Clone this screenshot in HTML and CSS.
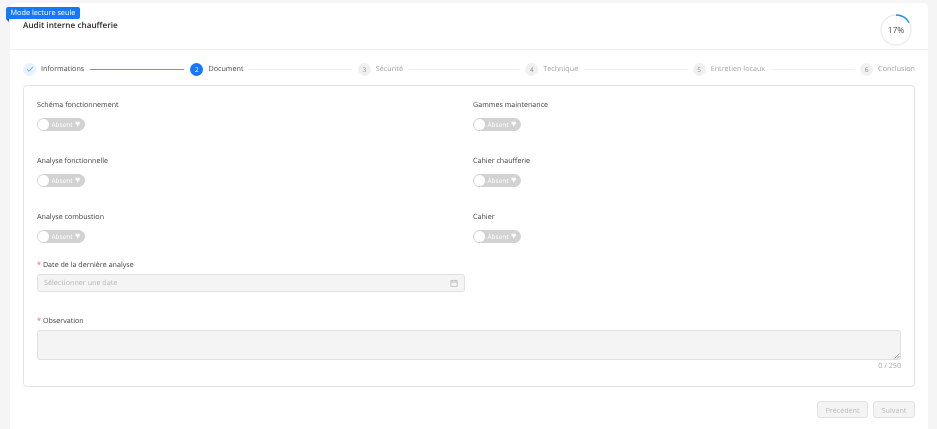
FILE: index.html
```html
<!DOCTYPE html>
<html lang="fr">
<head>
<meta charset="utf-8">
<title>Audit interne chaufferie</title>
<link rel="stylesheet" href="styles.css">
</head>
<body>
<main class="card">
  <span class="ribbon">Mode lecture seule</span>
  <header class="head">
    <h1 class="title">Audit interne chaufferie</h1>
    <div class="progress">
      <svg viewBox="0 0 32 32" width="32" height="32" class="ring">
        <circle cx="16" cy="16" r="15" class="ring-bg"/>
        <circle cx="16" cy="16" r="15" class="ring-fg" pathLength="100" stroke-dasharray="17 83" transform="rotate(-90 16 16)"/>
      </svg>
      <span class="progress-text">17%</span>
    </div>
  </header>
  <div class="body">
    <ol class="steps">
      <li class="step">
        <span class="dot dot-done"><svg viewBox="0 0 12 12" width="8" height="8"><path d="M1.500 6.500 4.600 9.500 10.500 2.500" fill="none" stroke="#1677ff" stroke-width="1"/></svg></span>
        <span class="step-name step-name-dark">Informations</span>
        <span class="line line-done"></span>
      </li>
      <li class="step">
        <span class="dot dot-now">2</span>
        <span class="step-name step-name-dark">Document</span>
        <span class="line"></span>
      </li>
      <li class="step"><span class="dot">3</span><span class="step-name">Sécurité</span><span class="line"></span></li>
      <li class="step"><span class="dot">4</span><span class="step-name">Technique</span><span class="line"></span></li>
      <li class="step"><span class="dot">5</span><span class="step-name">Entretien locaux</span><span class="line"></span></li>
      <li class="step step-last"><span class="dot">6</span><span class="step-name">Conclusion</span></li>
    </ol>
    <form class="box">
      <div class="grid">
        <div class="field"><label class="label">Schéma fonctionnement</label><span class="switch"><i class="knob"></i><span class="switch-text">Absent</span><svg class="thumb" viewBox="0 0 10 10" width="8" height="8"><path d="M1 1h8v3.500q0 1-1 1.200L6.300 6.500 6 8.800q-.2.800-1 .8t-1-.8L3.700 6.500 2 5.700q-1-.2-1-1.200z" fill="#fff"/></svg></span></div>
        <div class="field"><label class="label">Gammes maintenance</label><span class="switch"><i class="knob"></i><span class="switch-text">Absent</span><svg class="thumb" viewBox="0 0 10 10" width="8" height="8"><path d="M1 1h8v3.500q0 1-1 1.200L6.300 6.500 6 8.800q-.2.800-1 .8t-1-.8L3.700 6.500 2 5.700q-1-.2-1-1.200z" fill="#fff"/></svg></span></div>
        <div class="field"><label class="label">Analyse fonctionnelle</label><span class="switch"><i class="knob"></i><span class="switch-text">Absent</span><svg class="thumb" viewBox="0 0 10 10" width="8" height="8"><path d="M1 1h8v3.500q0 1-1 1.200L6.300 6.500 6 8.800q-.2.800-1 .8t-1-.8L3.700 6.500 2 5.700q-1-.2-1-1.200z" fill="#fff"/></svg></span></div>
        <div class="field"><label class="label">Cahier chaufferie</label><span class="switch"><i class="knob"></i><span class="switch-text">Absent</span><svg class="thumb" viewBox="0 0 10 10" width="8" height="8"><path d="M1 1h8v3.500q0 1-1 1.200L6.300 6.500 6 8.800q-.2.800-1 .8t-1-.8L3.700 6.500 2 5.700q-1-.2-1-1.200z" fill="#fff"/></svg></span></div>
        <div class="field field-short"><label class="label">Analyse combustion</label><span class="switch"><i class="knob"></i><span class="switch-text">Absent</span><svg class="thumb" viewBox="0 0 10 10" width="8" height="8"><path d="M1 1h8v3.500q0 1-1 1.200L6.300 6.500 6 8.800q-.2.800-1 .8t-1-.8L3.700 6.500 2 5.700q-1-.2-1-1.200z" fill="#fff"/></svg></span></div>
        <div class="field field-short"><label class="label">Cahier</label><span class="switch"><i class="knob"></i><span class="switch-text">Absent</span><svg class="thumb" viewBox="0 0 10 10" width="8" height="8"><path d="M1 1h8v3.500q0 1-1 1.200L6.300 6.500 6 8.800q-.2.800-1 .8t-1-.8L3.700 6.500 2 5.700q-1-.2-1-1.200z" fill="#fff"/></svg></span></div>
        <div class="field-date">
          <label class="label"><span class="star">*</span>Date de la dernière analyse</label>
          <div class="date">
            <span class="placeholder">Sélectionner une date</span>
            <svg viewBox="0 0 10 10" width="8" height="8"><path d="M1 2h8v7.500H1zM1 4h8M3 1v2M7 1v2" fill="none" stroke="#b5b5b5" stroke-width=".9"/></svg>
          </div>
        </div>
      </div>
      <label class="label"><span class="star">*</span>Observation</label>
      <div class="area">
        <svg class="grip" viewBox="0 0 6 6" width="6" height="6"><path d="M0.500 5.500 5.500 0.500M3 5.500 5.500 3" stroke="#888" stroke-width=".8"/></svg>
      </div>
      <div class="count">0 / 250</div>
    </form>
    <div class="actions">
      <button type="button" class="btn btn-prev" disabled>Précédent</button>
      <button type="button" class="btn btn-next" disabled>Suivant</button>
    </div>
  </div>
</main>
</body>
</html>
```
FILE: styles.css
```css
* { box-sizing: border-box; }
html, body { margin: 0; height: 100%; overflow: hidden; }
body {
  background: #f5f5f5;
  font-family: "Open Sans", "Noto Sans", sans-serif;
  font-size: 8px;
  color: #3b3b3b;
  text-rendering: geometricPrecision;
}
.card {
  position: relative;
  margin: 3px 9px 0 10px;
  height: 426px;
  background: #fff;
  border-radius: 5px 5px 0 0;
  filter: blur(.3px);
}
.ribbon {
  position: absolute;
  left: -4px;
  top: 4px;
  height: 12px;
  padding: 0 4.500px;
  line-height: 12px;
  font-size: 7.300px;
  color: #fff;
  background: #1677ff;
  border-radius: 2px 2px 2px 0;
}
.ribbon::after {
  content: "";
  position: absolute;
  left: 0;
  top: 12px;
  border-top: 3px solid #0e59c5;
  border-left: 3px solid transparent;
}
.head {
  display: flex;
  align-items: center;
  justify-content: space-between;
  height: 47px;
  padding: 0 16px 0 13px;
  border-bottom: 1px solid #f0f0f0;
}
.title {
  margin: 0 0 1px;
  font-size: 8.200px;
  line-height: 12px;
  font-weight: 600;
  color: #2b2b2b;
}
.progress { position: relative; width: 32px; height: 32px; margin-top: 8px; }
.ring { display: block; }
.ring-bg { fill: none; stroke: #eaeaea; stroke-width: 1.300; }
.ring-fg { fill: none; stroke: #1b95e8; stroke-width: 1.300; }
.progress-text {
  position: absolute;
  inset: 0;
  display: flex;
  align-items: center;
  justify-content: center;
  font-size: 8.500px;
  color: #555;
}
.body { padding: 0 13px; }
.steps {
  display: flex;
  align-items: center;
  list-style: none;
  margin: 0;
  padding: 3px 0 0;
  height: 35px;
}
.step {
  flex: 1 1 0;
  display: flex;
  align-items: center;
  min-width: 0;
}
.step-last { flex: 0 0 auto; }
.dot {
  flex: none;
  display: flex;
  align-items: center;
  justify-content: center;
  width: 13px;
  height: 13px;
  border-radius: 50%;
  background: #f0f0f0;
  font-size: 6.500px;
  color: #8c8c8c;
}
.dot-done { background: #e6f2ff; }
.dot-now { background: #1677ff; color: #fff; }
.step-name {
  margin-left: 5px;
  font-size: 7.200px;
  line-height: 12px;
  color: #a6a6a6;
  white-space: nowrap;
}
.step-name-dark { color: #4a4a4a; }
.line {
  flex: 1;
  height: 1px;
  margin: 0 6px;
  background: #f0f0f0;
}
.line-done { background: #5a9cf5; }
.box {
  height: 302px;
  padding: 13px 13px 0;
  border: 1px solid #e2e2e2;
  border-radius: 4px;
}
.grid {
  display: grid;
  grid-template-columns: 428px 428px;
  column-gap: 8px;
}
.field { height: 56px; }
.field-short { height: 48px; }
.field-date { height: 56px; }
.label {
  display: block;
  font-size: 7.150px;
  line-height: 12px;
  color: #454545;
}
.star {
  margin-right: 2px;
  color: #ff4d4f;
}
.switch {
  display: flex;
  align-items: center;
  width: 48px;
  height: 12.500px;
  margin-top: 7px;
  padding: 0 5px 0 1px;
  background: #d2d2d2;
  border-radius: 6.500px;
}
.knob {
  flex: none;
  width: 10.500px;
  height: 10.500px;
  border-radius: 50%;
  background: #fff;
}
.switch-text {
  margin-left: 3px;
  font-size: 6.500px;
  color: #fff;
}
.thumb { margin-left: 2px; }
.date {
  display: flex;
  align-items: center;
  justify-content: space-between;
  height: 18px;
  margin-top: 3px;
  padding: 0 6px;
  background: #f4f4f4;
  border: 1px solid #e0e0e0;
  border-radius: 3px;
}
.placeholder { font-size: 7.200px; color: #b8b8b8; }
.area {
  position: relative;
  height: 30px;
  margin-top: 3px;
  background: #f4f4f4;
  border: 1px solid #e0e0e0;
  border-radius: 3px;
}
.grip { position: absolute; right: 0; bottom: 0; }
.count {
  height: 11px;
  margin-top: 1px;
  line-height: 11px;
  text-align: right;
  font-size: 7.200px;
  color: #a8a8a8;
}
.actions {
  display: flex;
  justify-content: flex-end;
  gap: 5px;
  margin-top: 14px;
}
.btn {
  height: 17px;
  padding: 0;
  font: inherit;
  font-size: 7.200px;
  color: #bdbdbd;
  background: #f4f4f4;
  border: 1px solid #e2e2e2;
  border-radius: 3px;
}
.btn-prev { width: 51px; }
.btn-next { width: 42px; }
```
